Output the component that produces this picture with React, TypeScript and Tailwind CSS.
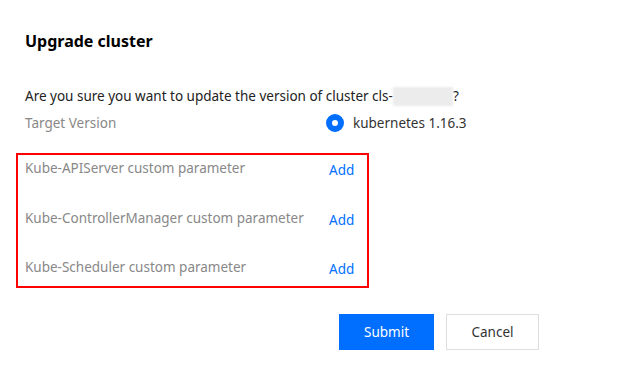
import React from 'react';

const rows = [
  'Kube-APIServer custom parameter',
  'Kube-ControllerManager custom parameter',
  'Kube-Scheduler custom parameter',
];

const App: React.FC = () => {
  return (
    <div className="w-[622px] h-[373px] bg-white text-[#222] font-['Noto_Sans',sans-serif] overflow-hidden">
      {/* Header */}
      <div className="pt-[30px] pl-[25px] h-[52px] text-[16px] leading-[22px] font-bold text-black">
        Upgrade cluster
      </div>

      {/* Body */}
      <div className="mt-[34px] pl-[25px] h-[20px] flex items-center text-[13.5px] leading-[20px]">
        <span>Are you sure you want to update the version of cluster cls-</span>
        <span className="w-[60px] h-[19px] bg-[#ececec] blur-[1px]" />
        <span>?</span>
      </div>
      <div className="mt-[7px] pl-[25px] h-[20px] flex items-center text-[13.5px] leading-[20px]">
        <span className="w-[301px] text-[#888]">Target Version</span>
        <span className="w-[18px] h-[18px] rounded-full border-[6px] border-[#006eff] bg-white" />
        <span className="ml-[9px] text-[#333]">kubernetes 1.16.3</span>
      </div>

      {/* Custom params */}
      <div className="mt-[20px] ml-[16px] w-[353px] border-2 border-[#ff0000] pt-[3px] pb-[9px] pl-[7px] flex flex-col gap-[29.5px] text-[13.5px] leading-[20px]">
        {rows.map(label => (
          <div key={label} className="h-[20px] flex items-start">
            <span className="w-[304px] text-[#888] whitespace-nowrap">{label}</span>
            <span className="mt-[2px] text-[#006eff]">Add</span>
          </div>
        ))}
      </div>

      {/* Footer */}
      <div className="mt-[26px] pl-[339px] flex gap-[12px] text-[13.5px]">
        <button className="w-[95px] h-[36px] bg-[#006eff] text-white">Submit</button>
        <button className="w-[93px] h-[36px] border border-[#dddddd] bg-white text-[#333]">Cancel</button>
      </div>
    </div>
  );
};

export default App;
